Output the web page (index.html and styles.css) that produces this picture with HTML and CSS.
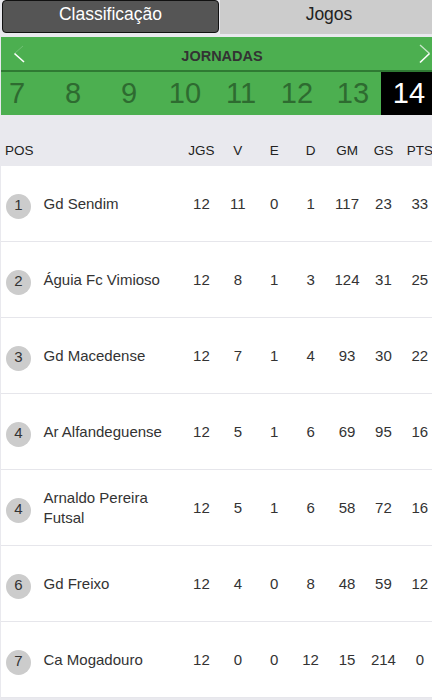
FILE: index.html
```html
<!DOCTYPE html>
<html lang="pt">
<head>
<meta charset="utf-8">
<title>Classificação</title>
<link rel="stylesheet" href="styles.css">
</head>
<body>
<div class="page">
  <div class="tabs">
    <div class="tab tab-active">Classificação</div>
    <div class="tab">Jogos</div>
  </div>

  <div class="jornadas">
    <div class="jhead">
      <svg class="chev" width="12" height="20" viewBox="0 0 12 20">
        <line x1="10" y1="2" x2="1.5" y2="9.5" stroke="#fff" stroke-opacity="0.2" stroke-width="1"/>
        <line x1="1.5" y1="9.5" x2="11" y2="18" stroke="#fff" stroke-width="1.6"/>
      </svg>
      <span class="jlabel">JORNADAS</span>
      <svg class="chev" width="12" height="20" viewBox="0 0 12 20">
        <line x1="1" y1="1" x2="10.5" y2="9.5" stroke="#fff" stroke-opacity="0.7" stroke-width="1.3"/>
        <line x1="10.5" y1="9.5" x2="1" y2="18.5" stroke="#fff" stroke-width="1.6"/>
      </svg>
    </div>
    <div class="rounds">
      <div class="round">7</div>
      <div class="round">8</div>
      <div class="round">9</div>
      <div class="round">10</div>
      <div class="round">11</div>
      <div class="round">12</div>
      <div class="round">13</div>
      <div class="round round-active">14</div>
    </div>
  </div>

  <div class="table">
    <div class="row thead">
      <div class="pos-h">POS</div>
      <div class="c">JGS</div>
      <div class="c">V</div>
      <div class="c">E</div>
      <div class="c">D</div>
      <div class="c">GM</div>
      <div class="c">GS</div>
      <div class="c">PTS</div>
    </div>

    <div class="row trow">
      <div class="badge">1</div><div class="name">Gd Sendim</div>
      <div class="c">12</div><div class="c">11</div><div class="c">0</div><div class="c">1</div><div class="c">117</div><div class="c">23</div><div class="c">33</div>
    </div>
    <div class="row trow">
      <div class="badge">2</div><div class="name">Águia Fc Vimioso</div>
      <div class="c">12</div><div class="c">8</div><div class="c">1</div><div class="c">3</div><div class="c">124</div><div class="c">31</div><div class="c">25</div>
    </div>
    <div class="row trow">
      <div class="badge">3</div><div class="name">Gd Macedense</div>
      <div class="c">12</div><div class="c">7</div><div class="c">1</div><div class="c">4</div><div class="c">93</div><div class="c">30</div><div class="c">22</div>
    </div>
    <div class="row trow">
      <div class="badge">4</div><div class="name">Ar Alfandeguense</div>
      <div class="c">12</div><div class="c">5</div><div class="c">1</div><div class="c">6</div><div class="c">69</div><div class="c">95</div><div class="c">16</div>
    </div>
    <div class="row trow">
      <div class="badge">4</div><div class="name">Arnaldo Pereira Futsal</div>
      <div class="c">12</div><div class="c">5</div><div class="c">1</div><div class="c">6</div><div class="c">58</div><div class="c">72</div><div class="c">16</div>
    </div>
    <div class="row trow">
      <div class="badge">6</div><div class="name">Gd Freixo</div>
      <div class="c">12</div><div class="c">4</div><div class="c">0</div><div class="c">8</div><div class="c">48</div><div class="c">59</div><div class="c">12</div>
    </div>
    <div class="row trow">
      <div class="badge">7</div><div class="name">Ca Mogadouro</div>
      <div class="c">12</div><div class="c">0</div><div class="c">0</div><div class="c">12</div><div class="c">15</div><div class="c">214</div><div class="c">0</div>
    </div>
  </div>
</div>
</body>
</html>
```

FILE: styles.css
```css
html, body {
  margin: 0;
  padding: 0;
}
body {
  background: #e9e9ee;
  font-family: "Liberation Sans", Arial, sans-serif;
  overflow: hidden;
  color: #333;
}
.page {
  width: 438px;
}

/* Tabs */
.tabs {
  display: flex;
  height: 34px;
}
.tab {
  flex: 1;
  background: #cccccc;
  color: #222;
  font-size: 17.5px;
  line-height: 28px;
  text-align: center;
}
.tab-active {
  flex: 0 0 215px;
  margin: 0 1px 1px 2px;
  background: #555555;
  color: #fff;
  border: 1px solid #111;
  border-radius: 4px;
  line-height: 27px;
}

/* Jornadas */
.jornadas {
  margin: 3px 1px 0 1px;
  background: #4caf50;
}
.jhead {
  height: 33px;
  display: flex;
  align-items: center;
  justify-content: space-between;
  padding: 0 6px 0 12px;
  border-bottom: 2px solid #2f7a33;
}
.chev {
  display: block;
}
.jlabel {
  font-size: 14.5px;
  font-weight: bold;
  color: #333;
  padding-top: 5px;
}
.rounds {
  display: flex;
  justify-content: flex-end;
  overflow: hidden;
  height: 43px;
}
.round {
  flex: 0 0 56px;
  text-align: center;
  font-size: 29px;
  line-height: 43px;
  color: #2e6b30;
}
.round-active {
  background: #000;
  color: #fff;
}

/* Table */
.table {
  margin: 0 0 0 1px;
}
.row {
  display: grid;
  grid-template-columns: 25px 1fr repeat(7, 36.4px);
  align-items: center;
}
.thead {
  height: 51px;
  align-items: end;
  padding-bottom: 7px;
  box-sizing: border-box;
  font-size: 13.5px;
  color: #222;
  line-height: 16px;
}
.pos-h {
  grid-column: 1 / 3;
  padding-left: 4px;
}
.c {
  text-align: center;
  white-space: nowrap;
}
.trow {
  background: #fff;
  height: 75px;
  border-bottom: 1px solid #e6e6eb;
  padding-left: 5px;
  font-size: 15px;
  color: #333;
}
.badge {
  width: 25px;
  height: 25px;
  border-radius: 50%;
  background: #cccccc;
  text-align: center;
  line-height: 21px;
  font-size: 15px;
  color: #333;
  margin-top: 6px;
}
.name {
  padding-left: 12.5px;
  line-height: 20px;
}
```
